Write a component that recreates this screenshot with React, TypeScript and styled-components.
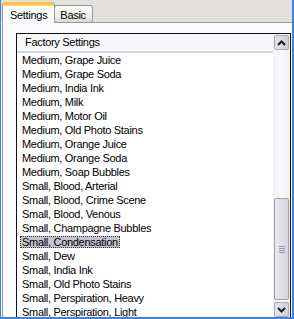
import React from "react";
import styled, { createGlobalStyle, css } from "styled-components";

const GlobalStyle = createGlobalStyle`
  html, body {
    margin: 0;
    padding: 0;
    background: #ffffff;
  }
  body {
    font-family: "Liberation Sans", Arial, sans-serif;
    font-size: 11px;
    letter-spacing: -0.3px;
    color: #000000;
  }
`;

const Frame = styled.div`
  width: 294px;
  height: 319px;
  box-sizing: border-box;
  padding: 0 2px 2px 1px;
  background: #3d84de;
  overflow: hidden;
`;

const Column = styled.div`
  height: 100%;
  display: flex;
  flex-direction: column;
  background: #fcfcfe;
`;

const TabStrip = styled.div`
  height: 22px;
  flex: none;
  display: flex;
  align-items: flex-end;
  padding-left: 1px;
  background: #e3e1de;
  position: relative;
  z-index: 1;
`;

const Tab = styled.div<{ $active?: boolean }>`
  box-sizing: border-box;
  border: 1px solid #919b9c;
  border-bottom: none;
  border-radius: 3px 3px 0 0;
  white-space: nowrap;
  ${(p) =>
    p.$active
      ? css`
          height: 21px;
          margin-bottom: -1px;
          padding: 4px 7px 0 7px;
          background: #fcfcfe;
          border-top: 3px solid #ffc53a;
          box-shadow: inset 0 1px 0 #ffd98a;
        `
      : css`
          height: 17px;
          margin-left: -1px;
          padding: 3px 6px 0 5px;
          background: linear-gradient(#ffffff, #ecebe6 70%, #d8d7d0);
        `}
`;

const Panel = styled.div`
  flex: 1;
  min-height: 0;
  margin-left: 1px;
  border-left: 1px solid #919b9c;
  border-top: 1px solid #919b9c;
  padding: 10px 1px 0 13px;
  overflow: hidden;
`;

const ListBox = styled.div`
  height: 284px;
  border: 1px solid #111111;
  display: flex;
  background: #ffffff;
  overflow: hidden;
`;

const ListMain = styled.div`
  flex: 1;
  display: flex;
  flex-direction: column;
`;

const Header = styled.div`
  height: 17px;
  flex: none;
  line-height: 17px;
  padding-left: 8px;
  background: #f7f7f9;
  border-bottom: 2px solid #d6d6e0;
`;

const Row = styled.div`
  height: 14px;
  flex: none;
  line-height: 14px;
  padding-left: 3px;
  white-space: nowrap;
`;

const Label = styled.span<{ $selected?: boolean }>`
  display: inline-block;
  padding: 0 2px;
  ${(p) =>
    p.$selected &&
    css`
      height: 12px;
      line-height: 12px;
      margin-top: 1px;
      background: #c4c4cc;
      outline: 1px dotted #333340;
      outline-offset: -1px;
    `}
`;

const ScrollBar = styled.div`
  width: 17px;
  flex: none;
  display: flex;
  flex-direction: column;
  align-items: center;
  padding: 1px 0;
  box-sizing: border-box;
  background: linear-gradient(90deg, #f0f0f6, #fbfbfd 50%, #eeeef4);
`;

const ArrowButton = styled.div`
  width: 15px;
  height: 15px;
  flex: none;
  box-sizing: border-box;
  border: 1px solid #a8a8b8;
  border-radius: 2px;
  background: linear-gradient(90deg, #e4e4ec, #d0d0dc);
  display: flex;
  align-items: center;
  justify-content: center;
`;

const Track = styled.div`
  flex: 1;
  width: 15px;
  display: flex;
  flex-direction: column;
  justify-content: flex-end;
  padding-bottom: 2px;
`;

const Thumb = styled.div`
  height: 102px;
  box-sizing: border-box;
  border: 1px solid #a0a0b0;
  border-radius: 2px;
  background: linear-gradient(90deg, #e8e8f0, #d6d6e2);
  display: flex;
  flex-direction: column;
  align-items: center;
  justify-content: center;
  gap: 1px;
`;

const Grip = styled.div`
  width: 6px;
  height: 1px;
  background: #9c9cae;
`;

const Chevron = ({ up }: { up?: boolean }) => (
  <svg width="9" height="6" viewBox="0 0 9 6">
    <polyline
      points={up ? "1,5 4.5,1.5 8,5" : "1,1 4.5,4.5 8,1"}
      fill="none"
      stroke="#1a1a2a"
      strokeWidth="2"
    />
  </svg>
);

const items = [
  "Medium, Grape Juice",
  "Medium, Grape Soda",
  "Medium, India Ink",
  "Medium, Milk",
  "Medium, Motor Oil",
  "Medium, Old Photo Stains",
  "Medium, Orange Juice",
  "Medium, Orange Soda",
  "Medium, Soap Bubbles",
  "Small, Blood, Arterial",
  "Small, Blood, Crime Scene",
  "Small, Blood, Venous",
  "Small, Champagne Bubbles",
  "Small, Condensation",
  "Small, Dew",
  "Small, India Ink",
  "Small, Old Photo Stains",
  "Small, Perspiration, Heavy",
  "Small, Perspiration, Light",
];

export default function App() {
  return (
    <>
      <GlobalStyle />
      <Frame>
        <Column>
          <TabStrip>
            <Tab $active>Settings</Tab>
            <Tab>Basic</Tab>
          </TabStrip>
          <Panel>
            <ListBox>
              <ListMain>
                <Header>Factory Settings</Header>
                {items.map((item) => (
                  <Row key={item}>
                    <Label $selected={item === "Small, Condensation"}>{item}</Label>
                  </Row>
                ))}
              </ListMain>
              <ScrollBar>
                <ArrowButton>
                  <Chevron up />
                </ArrowButton>
                <Track>
                  <Thumb>
                    <Grip />
                    <Grip />
                    <Grip />
                    <Grip />
                  </Thumb>
                </Track>
                <ArrowButton>
                  <Chevron />
                </ArrowButton>
              </ScrollBar>
            </ListBox>
          </Panel>
        </Column>
      </Frame>
    </>
  );
}
